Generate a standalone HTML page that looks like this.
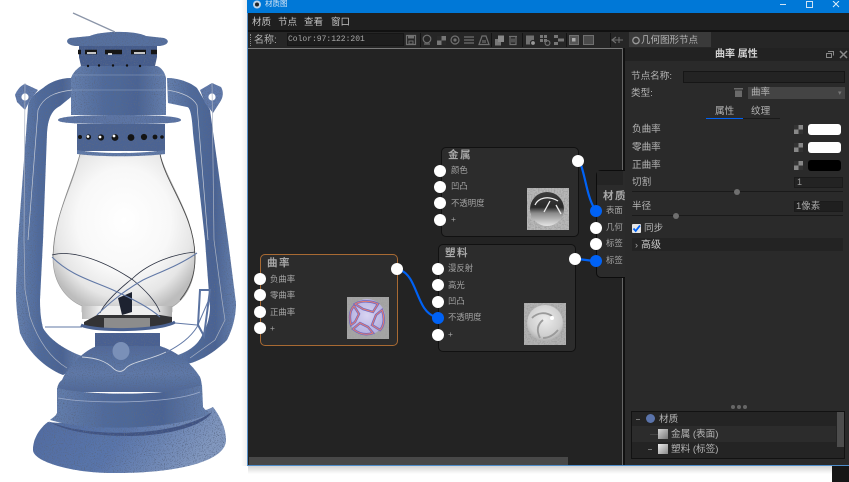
<!DOCTYPE html>
<html lang="zh"><head><meta charset="utf-8"><title>材质图</title>
<style>
html,body{margin:0;padding:0;background:#fff}
#r{position:relative;width:849px;height:482px;overflow:hidden;background:#fff;font-family:"Liberation Sans","Noto Sans CJK SC",sans-serif;color:#b4b4b4;font-size:10px;line-height:12px}
#r div,#r span{position:absolute;white-space:nowrap}
.p{width:12px;height:12px;border-radius:50%;background:#fff;margin:-6px 0 0 -6px}
.b{background:#0062f5}
.t{color:#a4a4a4;font-size:8.4px}
.g{color:#b4b4b4;font-size:9.6px}
.n{font-size:10.5px;font-weight:bold;color:#a9a9a9;letter-spacing:1.5px}
.m{font-size:9.5px;color:#c4c4c4}
</style></head><body><div id="r">

<svg style="position:absolute;left:0;top:0" width="247" height="482" viewBox="0 0 247 482">
<defs>
<filter id="n" x="0" y="0" width="100%" height="100%"><feTurbulence type="fractalNoise" baseFrequency="0.9" numOctaves="2" seed="4"/><feColorMatrix values="0 0 0 0 0.1 0 0 0 0 0.14 0 0 0 0 0.24 0 0 0 5 -2.7"/><feComposite in2="SourceGraphic" operator="in" result="s"/><feMerge><feMergeNode in="SourceGraphic"/><feMergeNode in="s"/></feMerge></filter>
<linearGradient id="h" x1="0" x2="1" y1="0" y2="0"><stop offset="0" stop-color="#6680ae"/><stop offset=".35" stop-color="#4f6a9c"/><stop offset=".7" stop-color="#4a6394"/><stop offset="1" stop-color="#6680ae"/></linearGradient>
<linearGradient id="v" x1="0" x2="0" y1="0" y2="1"><stop offset="0" stop-color="#5f79a9"/><stop offset="1" stop-color="#42598a"/></linearGradient>
<linearGradient id="dm" x1="0" x2="0" y1="0" y2="1"><stop offset="0" stop-color="#50699a"/><stop offset=".6" stop-color="#5f79a8"/><stop offset="1" stop-color="#4f6898"/></linearGradient>
<linearGradient id="sk" x1="0" x2="1" y1="0" y2=".25"><stop offset="0" stop-color="#4f6aa0"/><stop offset=".55" stop-color="#5a76ac"/><stop offset="1" stop-color="#8298bf"/></linearGradient>
<radialGradient id="gl" cx=".5" cy=".42" r=".6"><stop offset="0" stop-color="#fff"/><stop offset=".55" stop-color="#f8f8f8"/><stop offset=".82" stop-color="#e6e6e6"/><stop offset="1" stop-color="#bdbdbd"/></radialGradient>
<linearGradient id="cl" x1="0" x2="1" y1="0" y2="0"><stop offset="0" stop-color="#bbb"/><stop offset=".2" stop-color="#eee"/><stop offset=".8" stop-color="#eee"/><stop offset="1" stop-color="#aaa"/></linearGradient>
</defs>
<path d="M53 258C53 215 72 190 80 154H160C168 185 195 215 195 258C195 285 184 300 172 307V312H82V306C68 300 53 285 53 258Z" fill="url(#gl)" stroke="#9a9a9a" stroke-width=".6"/>
<path d="M160 154C166 185 195 215 195 258C195 275 190 288 180 300" fill="none" stroke="#444" stroke-width=".8"/>
<path d="M80 154C72 185 54 215 53 258" fill="none" stroke="#888" stroke-width=".7"/>
<rect x="82" y="306" width="90" height="13" fill="url(#cl)"/>
<path d="M118 298L132 292V312L122 315Z" fill="#1d2230"/>
<path d="M84 322L97 315H160L172 317V324C150 330 105 330 84 326Z" fill="#333335"/>
<path d="M104 318H150V329H104Z" fill="#8c8c8c"/>
<g filter="url(#n)">
<path d="M71 78C60 78 50 82 43 88C34 94 28 100 28 107L22 187L18 240L16 290C16 310 18 320 20 333C28 352 45 368 63 375L80 367L82 356C65 350 50 340 43 328C41 320 40 312 40 300L43 240L47 133C48 118 52 110 60 106L71 97Z" fill="url(#h)"/>
<path d="M167 78C178 78 190 82 197 88L210 110L228 240L236 303C236 318 232 330 227 340C215 352 200 362 183 365L178 355C192 350 200 342 203 333C208 325 210 315 210 307L205 240L193 133C192 115 190 107 187 107L168 103Z" fill="url(#h)"/>
<path d="M15 95C17 90 21 85 25 84L38 90L30 100L25 110L17 102Z" fill="#6079aa"/>
<path d="M200 90L212 83L221 87C224 92 223 98 220 102L213 113L205 103Z" fill="#6079aa"/>
<path d="M95 333H160V352H95Z" fill="#4a6192"/>
<path d="M82 355C88 350 92 348 97 346H160C178 352 192 364 200 377C202 382 202 388 202 392H57C57 386 59 382 62 380C66 370 74 362 82 355Z" fill="url(#dm)"/>
<path d="M48 422C40 428 33 438 33 450C33 462 75 474 118 473C175 473 226 462 226 440C226 428 220 416 213 407C190 420 80 426 48 422Z" fill="url(#sk)"/>
<path d="M57 388C90 396 170 396 202 385L203 407C205 410 208 412 210 414C170 430 90 432 50 420C52 418 56 416 57 413Z" fill="url(#h)"/>
<path d="M48 421C85 438 175 438 212 412C205 425 170 436 128 436C90 436 62 430 48 421Z" fill="#3f5283"/>
<path d="M77 124H165V151H77Z" fill="#4b6393"/>
<path d="M77 150C100 154 140 154 165 150V154C140 157 100 157 77 154Z" fill="#617aa8"/>
<path d="M58 120C58 117 75 115 120 115C165 115 181 117 181 120C181 123 165 124 120 124C75 124 58 123 58 120Z" fill="#5b75a5"/>
<path d="M71 78C73 72 78 68 81 66H157C162 68 165 73 166 78V115H71Z" fill="url(#h)"/>
<path d="M79 46H157V57L155 66H81L79 57Z" fill="#445b8c"/>
<path d="M90 36C100 31 135 30 146 36L164 38C170 40 169 45 160 46H76C66 45 65 40 70 38Z" fill="#56709f"/>
</g>
<ellipse cx="121" cy="351" rx="8.500" ry="9" fill="#7a90b8"/>
<path d="M78 52h3M85 52h12M105 52h17M131 52h15M151 52h6" stroke="#161616" stroke-width="4.500"/>
<path d="M87 53h9M108 54h4M134 53h11" stroke="#fff" stroke-width="1.500"/>
<g fill="#141414"><circle cx="80" cy="137" r="2"/><circle cx="88.500" cy="137" r="2.600"/><circle cx="101" cy="137.500" r="3.100"/><circle cx="115" cy="137.500" r="3.400"/><circle cx="131" cy="137.500" r="3.400"/><circle cx="144" cy="137" r="3.100"/><circle cx="155" cy="137" r="2.400"/><circle cx="162" cy="137" r="1.800"/></g>
<g fill="#fff"><circle cx="88" cy="136.500" r="1.400"/><circle cx="100" cy="137" r="1.400"/><circle cx="114" cy="136" r="1.400"/></g>
<g fill="#111"><circle cx="88" cy="66" r="1.200"/><circle cx="99" cy="65.500" r="1.200"/><circle cx="113" cy="65.500" r="1.200"/><circle cx="127" cy="65.500" r="1.200"/><circle cx="140" cy="66" r="1.200"/></g>
<circle cx="25" cy="97" r="3.600" fill="#fff"/><circle cx="212" cy="97" r="3.600" fill="#fff"/>
<path d="M73 13L115 32" stroke="#8b95a8" stroke-width="1.300"/>
<path d="M25 83L24 240L25 290L30 317C38 340 50 358 67 368M212 83L214 240L222 300L225 320L215 340L190 358" stroke="#aab3c4" stroke-width=".7" fill="none"/>
<path d="M72 90C55 92 43 97 38 110L28 240M167 90C180 92 192 96 197 105L208 240" stroke="#c4cad6" stroke-width=".7" fill="none"/>
<path d="M72 90H165M72 75H165" stroke="#8ea1c2" stroke-width=".6"/>
<path d="M58 398C90 404 170 404 200 392" stroke="#9daccb" stroke-width=".8" fill="none"/>
<path d="M82 357C95 358 105 360 114 369C118 372 122 372 125 369C130 362 150 360 166 352" stroke="#cfd5e0" stroke-width=".9" fill="none"/>
<path d="M52 255C70 250 100 258 133 280C145 290 155 300 160 312M195 252C175 254 150 262 133 278C118 290 105 302 100 313" stroke="#2a3040" stroke-width=".8" fill="none"/>
<path d="M52 257C70 275 90 280 113 290C135 300 150 308 160 317M197 253C180 265 160 272 143 280C125 290 108 304 97 315M45 327H82M175 323L197 325" stroke="#6178a6" stroke-width="1.100" fill="none"/>
<path d="M210 297L197 327C190 338 180 345 167 352" stroke="#6178a6" stroke-width="1" fill="none"/>
<path d="M81 325C95 332 160 331 175 322" stroke="#4b6291" stroke-width="3" fill="none"/>
<path d="M200 290H210L204 336L198 325Z" fill="none" stroke="#5a72a0" stroke-width="2"/>
</svg>

<!-- window shadow -->
<div style="left:248px;top:465px;width:584px;height:9px;background:linear-gradient(#cfcfcf,#fff)"></div>
<div style="left:241px;top:0;width:7px;height:466px;background:linear-gradient(90deg,#fff,#ececec)"></div>
<div style="left:832px;top:465px;width:17px;height:17px;background:#161616"></div>

<!-- window -->
<div style="left:247px;top:0;width:602px;height:466px;background:#232323;border-left:1px solid #5b92c8;border-bottom:1px solid #4f8dca;box-sizing:border-box"></div>
<div style="left:247px;top:0;width:602px;height:13px;background:#0078d7"></div>
<svg style="position:absolute;left:251px;top:0" width="12" height="10"><circle cx="6" cy="4.500" r="4" fill="#bcd4ea"/><circle cx="6" cy="4.500" r="2" fill="#222"/></svg>
<div style="left:265px;top:-2px;font-size:7.500px;color:#d5e6f6;line-height:12px">材质图</div>
<div style="left:780px;top:4px;width:6px;height:1px;background:#cfe3f5"></div>
<div style="left:806px;top:1px;width:5px;height:5px;border:1px solid #cfe3f5"></div>
<svg style="position:absolute;left:832px;top:1px" width="8" height="8" stroke="#dfeefa"><path d="M1 0L7 6M7 0L1 6"/></svg>

<!-- menu -->
<div style="left:248px;top:13px;width:601px;height:18px;background:#1f1f1f"></div>
<div class="m" style="left:252px;top:17px">材质</div>
<div class="m" style="left:278px;top:17px">节点</div>
<div class="m" style="left:304px;top:17px">查看</div>
<div class="m" style="left:331px;top:17px">窗口</div>

<!-- toolbar -->
<div style="left:248px;top:30px;width:601px;height:2px;background:#111"></div>
<div style="left:248px;top:32px;width:601px;height:16px;background:#262626"></div>
<div style="left:250px;top:34px;width:1px;height:12px;border-left:1px dotted #888"></div>
<div style="left:254px;top:35px;font-size:10px;color:#b0b0b0">名称:</div>
<div style="left:287px;top:33px;width:117px;height:13px;background:#1d1d1d;border:1px solid #161616;box-sizing:border-box"></div>
<div style="left:288px;top:34px;font-family:'Liberation Mono',monospace;font-size:8px;color:#a8a8a8;line-height:12px">Color:97:122:201</div>
<svg style="position:absolute;left:404px;top:32px" width="225" height="16" fill="none" stroke="#707070" stroke-width="1.200">
<path d="M16.500 1V15M87.500 1V15M118.500 1V15M162.500 1V15M206.500 1V15" stroke="#141414" stroke-width="1"/>
<path d="M2.500 3.500H11.500V12.500H2.500Z"/><path d="M4 3.500H10V6.500H4Z" fill="#707070" stroke="none"/><path d="M5 9H9V12H5Z" stroke-width="1"/>
<circle cx="23" cy="7" r="3.800"/><path d="M20 12H26"/>
<rect x="33" y="4" width="9" height="9" fill="#777" stroke="none"/><rect x="33" y="4" width="4.500" height="4.500" fill="#2a2a2a" stroke="none"/><rect x="37.500" y="8.500" width="4.500" height="4.500" fill="#2a2a2a" stroke="none"/>
<circle cx="51" cy="8" r="4"/><circle cx="51" cy="8" r="1" fill="#777"/>
<path d="M60 5H70M60 8H70M60 11H70"/>
<path d="M75 12.500L78 4H82L85 12.500ZM79 8V11M81 8V11"/>
<rect x="91" y="7" width="6" height="6.500" fill="#777" stroke="none"/><rect x="94" y="3.500" width="6" height="6.500" fill="#8a8a8a" stroke="none"/>
<path d="M105 4.500H113M106 4.500V12.500H112V4.500M108 6.500V10.500M110 6.500V10.500"/>
<rect x="122" y="3.500" width="8" height="9" fill="#707070" stroke="none"/><circle cx="129" cy="11" r="2.500" fill="#999" stroke="#262626"/>
<g fill="#777" stroke="none"><rect x="136" y="3" width="3" height="3"/><rect x="140" y="3" width="3" height="3"/><rect x="136" y="7" width="3" height="3"/><rect x="140" y="7" width="3" height="3"/></g><circle cx="143.500" cy="11" r="2.400"/>
<g fill="#777" stroke="none"><rect x="150" y="3" width="4" height="3"/><rect x="150" y="10" width="4" height="3"/><rect x="154" y="6.500" width="6" height="3"/></g>
<rect x="165.500" y="3.500" width="9" height="9" fill="#555" stroke-width="1"/><rect x="168" y="6" width="3.500" height="3.500" fill="#aaa" stroke="none"/>
<rect x="179.500" y="3.500" width="10" height="9" fill="#4a4a4a" stroke-width="1"/>
<path d="M208 8H219M212 5L208 8L212 11M215 5V11" stroke-width="1.100"/>
</svg>
<div style="left:629px;top:32px;width:82px;height:15px;background:#3a3a3a"></div>
<svg style="position:absolute;left:631px;top:35px" width="10" height="11" fill="none" stroke="#999" stroke-width="1.300"><circle cx="5" cy="5.500" r="3.200"/></svg>
<div style="left:641px;top:35px;font-size:9.500px;color:#b4b4b4">几何图形节点</div>

<!-- canvas -->
<div style="left:248px;top:48px;width:375px;height:417px;background:#232323;border-top:1px solid #7a7a7a;box-sizing:border-box"></div>
<div style="left:623px;top:48px;width:2px;height:417px;background:#111"></div>
<div style="left:622px;top:48px;width:1px;height:417px;background:#666"></div>
<div style="left:249px;top:457px;width:319px;height:8px;background:#484848"></div>

<!-- material node -->
<div style="left:596px;top:170px;width:40px;height:108px;background:#2b2b2b;border:1px solid #0c0c0c;border-radius:5px;box-sizing:border-box"></div>
<div style="left:597px;top:171px;width:26px;height:14px;background:#242424"></div>
<div class="n" style="left:603px;top:190px">材质</div>
<div class="t" style="left:606px;top:204px">表面</div>
<div class="t" style="left:606px;top:221px">几何</div>
<div class="t" style="left:606px;top:237px">标签</div>
<div class="t" style="left:606px;top:254px">标签</div>

<!-- metal node -->
<div style="left:441px;top:147px;width:138px;height:90px;background:#2c2c2c;border:1px solid #111;border-radius:5px;box-sizing:border-box"></div>
<div class="n" style="left:448px;top:149px">金属</div>
<div class="t" style="left:451px;top:164px">颜色</div>
<div class="t" style="left:451px;top:180px">凹凸</div>
<div class="t" style="left:451px;top:197px">不透明度</div>
<div class="t" style="left:451px;top:213px">+</div>

<!-- plastic node -->
<div style="left:438px;top:244px;width:138px;height:108px;background:#2c2c2c;border:1px solid #111;border-radius:5px;box-sizing:border-box"></div>
<div class="n" style="left:445px;top:247px">塑料</div>
<div class="t" style="left:448px;top:262px">漫反射</div>
<div class="t" style="left:448px;top:279px">高光</div>
<div class="t" style="left:448px;top:295px">凹凸</div>
<div class="t" style="left:448px;top:311px">不透明度</div>
<div class="t" style="left:448px;top:328px">+</div>

<!-- curvature node -->
<div style="left:260px;top:254px;width:138px;height:92px;background:#2c2c2c;border:1px solid #a86a33;border-radius:5px;box-sizing:border-box"></div>
<div class="n" style="left:267px;top:257px">曲率</div>
<div class="t" style="left:270px;top:273px">负曲率</div>
<div class="t" style="left:270px;top:289px">零曲率</div>
<div class="t" style="left:270px;top:306px">正曲率</div>
<div class="t" style="left:270px;top:322px">+</div>

<svg style="position:absolute;left:0;top:0" width="849" height="482" fill="none">
<defs>
<filter id="tx" x="0" y="0" width="100%" height="100%"><feTurbulence type="fractalNoise" baseFrequency=".7" numOctaves="1" seed="2"/><feColorMatrix values="0 0 0 0 .35 0 0 0 0 .35 0 0 0 0 .35 0 0 0 3 -1.200"/><feComposite in2="SourceGraphic" operator="in" result="s"/><feMerge><feMergeNode in="SourceGraphic"/><feMergeNode in="s"/></feMerge></filter>
<linearGradient id="m" x1="0" x2="0" y1="0" y2="1"><stop offset="0" stop-color="#3c3c3c"/><stop offset=".45" stop-color="#2a2a2a"/><stop offset=".62" stop-color="#8a8a8a"/><stop offset="1" stop-color="#e6e6e6"/></linearGradient>
<radialGradient id="pl" cx=".5" cy=".4" r=".65"><stop offset="0" stop-color="#ececec"/><stop offset=".7" stop-color="#cfcfcf"/><stop offset="1" stop-color="#a4a4a4"/></radialGradient>
<radialGradient id="cu" cx=".5" cy=".45" r=".6"><stop offset="0" stop-color="#d8d4f2"/><stop offset="1" stop-color="#b0abdc"/></radialGradient>
</defs>
<path d="M581 165C586 180 587 195 594 208M400 270C418 276 416 312 436 317M578 259L594 261" stroke="#0062f5" stroke-width="2.200"/>
<rect x="527" y="188" width="42" height="42" fill="#b8b8b8" filter="url(#tx)"/>
<circle cx="547" cy="209" r="17" fill="url(#m)"/>
<path d="M535 205C538 198 548 195 558 201M544 212L550 201M556 205L561 214" stroke="#eee" stroke-width="1.300"/>
<rect x="524" y="303" width="42" height="42" fill="#b2b2b2" filter="url(#tx)"/>
<circle cx="545" cy="323" r="18" fill="url(#pl)"/>
<path d="M532 318C538 312 546 312 552 316M540 338C536 330 538 324 543 320M558 330C553 336 548 338 543 338" stroke="#9a9a9a" stroke-width="1.800"/><circle cx="552" cy="318" r="2" fill="#fff"/>
<rect x="347" y="297" width="42" height="42" fill="#a5a5a5" filter="url(#tx)"/>
<circle cx="367" cy="317" r="18" fill="url(#cu)"/>
<path d="M355 304C362 300 372 301 378 304L373 312L363 309ZM382 310C385 318 384 326 380 330L372 325L376 315ZM373 333C365 336 358 333 353 329L360 323L368 327ZM351 325C349 317 350 310 354 306L359 314L355 322Z" stroke="#6a68c6" stroke-width="2.400"/>
<path d="M355 304C362 300 372 301 378 304L373 312L363 309ZM382 310C385 318 384 326 380 330L372 325L376 315ZM373 333C365 336 358 333 353 329L360 323L368 327ZM351 325C349 317 350 310 354 306L359 314L355 322Z" stroke="#e57c70" stroke-width="1"/>
</svg>

<div class="p" style="left:578px;top:161px"></div>
<div class="p" style="left:575px;top:259px"></div>
<div class="p" style="left:397px;top:269px"></div>
<div class="p" style="left:440px;top:171px"></div><div class="p" style="left:440px;top:187px"></div><div class="p" style="left:440px;top:203px"></div><div class="p" style="left:440px;top:220px"></div>
<div class="p" style="left:438px;top:269px"></div><div class="p" style="left:438px;top:285px"></div><div class="p" style="left:438px;top:302px"></div><div class="p b" style="left:438px;top:318px"></div><div class="p" style="left:438px;top:335px"></div>
<div class="p" style="left:260px;top:279px"></div><div class="p" style="left:260px;top:295px"></div><div class="p" style="left:260px;top:312px"></div><div class="p" style="left:260px;top:328px"></div>
<div class="p b" style="left:596px;top:211px"></div><div class="p" style="left:596px;top:228px"></div><div class="p" style="left:596px;top:244px"></div><div class="p b" style="left:596px;top:261px"></div>

<!-- panel -->
<div style="left:625px;top:48px;width:224px;height:417px;background:#2a2a2a"></div>
<div style="left:625px;top:48px;width:224px;height:13px;background:#222"></div>
<div style="left:715px;top:49px;font-size:10px;font-weight:bold;color:#d2d2d2">曲率 属性</div>
<svg style="position:absolute;left:825px;top:50px" width="24" height="10" fill="none" stroke="#888"><rect x="1.500" y="3.500" width="5" height="4"/><path d="M3 1.500H8.500V5.500"/><path d="M15 1L22 8M22 1L15 8" stroke-width="1.500"/></svg>
<div class="g" style="left:631px;top:71px">节点名称:</div>
<div style="left:683px;top:71px;width:162px;height:12px;background:#232323;border:1px solid #161616;box-sizing:border-box"></div>
<div class="g" style="left:631px;top:88px">类型:</div>
<svg style="position:absolute;left:733px;top:87px" width="11" height="11" fill="#6a6a6a"><path d="M1 1H10V2.500H1ZM2 3.500H9V10H2Z"/></svg>
<div style="left:748px;top:87px;width:97px;height:12px;background:#444"></div>
<div class="g" style="left:751px;top:87px;font-size:9.500px">曲率</div>
<div style="left:838px;top:88px;font-size:7px;color:#777">▾</div>
<div class="g" style="left:715px;top:106px">属性</div>
<div class="g" style="left:751px;top:106px">纹理</div>
<div style="left:706px;top:118px;width:37px;height:1px;background:#0062f5"></div>
<div style="left:743px;top:118px;width:37px;height:1px;background:#1a1a1a"></div>

<div class="g" style="left:632px;top:124px">负曲率</div>
<div class="g" style="left:632px;top:142px">零曲率</div>
<div class="g" style="left:632px;top:160px">正曲率</div>
<div class="g" style="left:632px;top:177px">切割</div>
<div class="g" style="left:632px;top:201px">半径</div>
<svg style="position:absolute;left:794px;top:125px" width="10" height="46"><g><rect width="9" height="9" fill="#888"/><rect width="4.500" height="4.500" fill="#333"/><rect x="4.500" y="4.500" width="4.500" height="4.500" fill="#333"/></g><g transform="translate(0,18)"><rect width="9" height="9" fill="#888"/><rect width="4.500" height="4.500" fill="#333"/><rect x="4.500" y="4.500" width="4.500" height="4.500" fill="#333"/></g><g transform="translate(0,36)"><rect width="9" height="9" fill="#888"/><rect width="4.500" height="4.500" fill="#333"/><rect x="4.500" y="4.500" width="4.500" height="4.500" fill="#333"/></g></svg>
<div style="left:808px;top:124px;width:33px;height:11px;background:#fff;border-radius:3px"></div>
<div style="left:808px;top:142px;width:33px;height:11px;background:#fff;border-radius:3px"></div>
<div style="left:808px;top:160px;width:33px;height:11px;background:#000;border-radius:3px"></div>
<div style="left:794px;top:177px;width:49px;height:11px;background:#232323;border:1px solid #1b1b1b;box-sizing:border-box"></div>
<div style="left:797px;top:177px;font-size:9px;color:#999;line-height:11px">1</div>
<div style="left:794px;top:201px;width:49px;height:11px;background:#1f1f1f;border:1px solid #1b1b1b;box-sizing:border-box"></div>
<div style="left:796px;top:201px;font-size:9.500px;color:#aaa;line-height:11px">1像素</div>
<div style="left:632px;top:191px;width:211px;height:1px;background:#1a1a1a"></div>
<div style="left:734px;top:189px;width:6px;height:6px;border-radius:50%;background:#6f6f6f"></div>
<div style="left:632px;top:215px;width:211px;height:1px;background:#1a1a1a"></div>
<div style="left:673px;top:213px;width:6px;height:6px;border-radius:50%;background:#6f6f6f"></div>
<svg style="position:absolute;left:632px;top:224px" width="9" height="9"><rect width="9" height="9" rx="1" fill="#e6e6e6"/><path d="M1.500 4.500L3.700 7L8 1.500" stroke="#0062f5" stroke-width="1.800" fill="none"/></svg>
<div class="g" style="left:644px;top:223px">同步</div>
<div style="left:632px;top:238px;width:211px;height:13px;background:#232323"></div>
<div style="left:635px;top:239px;font-size:9px;color:#aaa">›</div>
<div style="left:641px;top:240px;font-size:10px;color:#c8c8c8;line-height:11px">高级</div>

<div style="left:731px;top:405px;width:4px;height:4px;border-radius:50%;background:#666"></div>
<div style="left:737px;top:405px;width:4px;height:4px;border-radius:50%;background:#666"></div>
<div style="left:743px;top:405px;width:4px;height:4px;border-radius:50%;background:#666"></div>
<div style="left:631px;top:411px;width:214px;height:48px;background:#242424;border:1px solid #121212;box-sizing:border-box"></div>
<div style="left:632px;top:426px;width:204px;height:16px;background:#2c2c2c"></div>
<div style="left:837px;top:412px;width:7px;height:35px;background:#4d4d4d"></div>
<div style="left:636px;top:419px;width:4px;height:1px;background:#777"></div>
<div style="left:646px;top:414px;width:9px;height:9px;border-radius:50%;background:#5a73aa"></div>
<div class="g" style="left:659px;top:414px">材质</div>
<div style="left:650px;top:434px;width:8px;height:1px;background:#444"></div>
<div style="left:658px;top:429px;width:10px;height:10px;background:linear-gradient(135deg,#d5d5d5,#777)"></div>
<div class="g" style="left:671px;top:429px">金属 (表面)</div>
<div style="left:648px;top:449px;width:4px;height:1px;background:#777"></div>
<div style="left:658px;top:444px;width:10px;height:10px;background:linear-gradient(135deg,#eee,#888)"></div>
<div class="g" style="left:671px;top:444px">塑料 (标签)</div>
</div></body></html>
